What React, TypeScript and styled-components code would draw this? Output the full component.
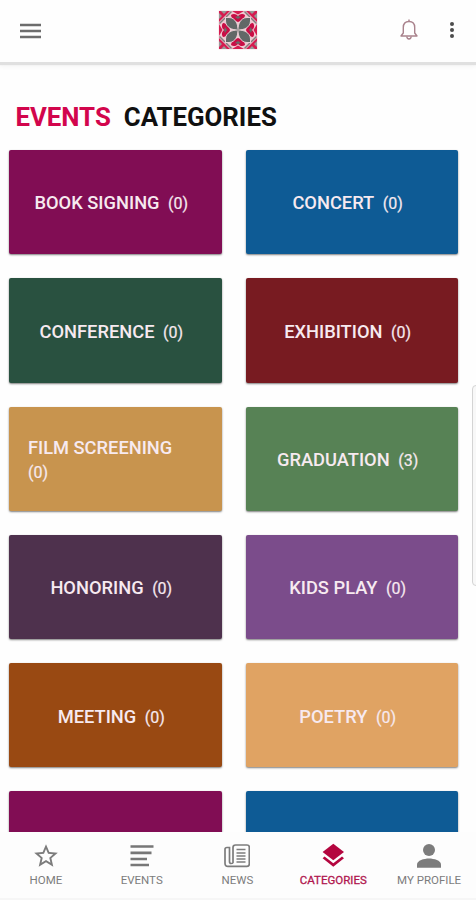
import React from "react";
import styled, { createGlobalStyle } from "styled-components";

const GlobalStyle = createGlobalStyle`
  * { box-sizing: border-box; }
  body { margin: 0; background: #fefefe; font-family: Roboto, "Liberation Sans", sans-serif; }
`;

const Screen = styled.div`
  position: relative;
  display: flex;
  flex-direction: column;
  height: 900px;
  overflow: hidden;
`;

const Toolbar = styled.header`
  display: grid;
  grid-template-columns: 1fr 40px 1fr;
  align-items: center;
  height: 62px;
  flex: none;
  padding: 0 15px 2px;
  background: #fefefe;
  box-shadow: 0 2px 1px 1px #e0e0e0, 0 4px 5px #f3f3f3;
  svg { display: block; }
`;

const MenuButton = styled.div`
  padding: 1px 0 0 5px;
`;

const Actions = styled.div`
  display: flex;
  justify-content: flex-end;
  align-items: center;
  gap: 25px;
`;

const Content = styled.main`
  flex: 1;
  min-height: 0;
  overflow: hidden;
  padding: 38px 18px 0 9.4px;
`;

const Heading = styled.h1`
  display: flex;
  gap: 13px;
  margin: 0;
  padding: 0 0 0 6px;
  height: 50px;
  font-size: 25.8px;
  line-height: 34px;
  font-weight: 700;
  color: #101010;
`;

const Accent = styled.span`
  color: #d2054c;
`;

const Grid = styled.div`
  display: grid;
  grid-template-columns: 1fr 1fr;
  column-gap: 24px;
  row-gap: 24px;
`;

const Card = styled.a<{ $color: string }>`
  display: flex;
  align-items: center;
  justify-content: center;
  height: 104.3px;
  padding: 4px 18.5px 0;
  border-radius: 2px;
  background: ${(p) => p.$color};
  box-shadow: 0 1px 2px rgba(0, 0, 0, 0.5);
  color: #f7eaf0;
`;

const CardText = styled.div`
  display: flex;
  flex-wrap: wrap;
  align-items: baseline;
  line-height: 24.5px;
`;

const CardName = styled.span`
  margin-right: 8.5px;
  font-size: 18.3px;
  font-weight: 500;
`;

const CardCount = styled.span`
  margin-right: 8.5px;
  font-size: 16px;
  -webkit-text-stroke: 0.2px;
`;

const ScrollHandle = styled.div`
  position: absolute;
  top: 385px;
  right: -6px;
  width: 10px;
  height: 201px;
  border: 1px solid #d4d4d4;
  border-radius: 4px;
  background: #f8f8f8;
`;

const BottomNav = styled.nav`
  display: grid;
  grid-template-columns: repeat(5, 1fr);
  flex: none;
  height: 68px;
  margin: 0 -1px 0 -2px;
  background: #fdfdfd;
  border-bottom: 2px solid #f6f6f6;
`;

const NavItem = styled.a<{ $active?: boolean }>`
  display: flex;
  flex-direction: column;
  align-items: center;
  padding-top: 11px;
  gap: 2px;
  font-size: 11.5px;
  line-height: 19px;
  white-space: nowrap;
  color: ${(p) => (p.$active ? "#b0164e" : "#7c7c7c")};
  -webkit-text-stroke: ${(p) => (p.$active ? "0.3px #b0164e" : "0")};
  svg { display: block; flex: none; }
`;

const MenuIcon = () => (
  <svg width="22" height="18" viewBox="0 0 22 18">
    <path d="M0 3h21M0 9h21M0 15h21" stroke="#6c6c6c" strokeWidth="2.4" />
  </svg>
);

const Quarter = () => (
  <g>
    <path d="M1 1h11L1 12Z" fill="#d51c50" />
    <path d="M3 1l3 3 3-3ZM1 3l3 3-3 3Z" fill="#999" />
    <path d="M13.500 1.500L8 7M1.500 13.500L7 8" stroke="#857b7d" strokeWidth="1.5" />
    <path d="M13 5C15.500 3 18.500 4 20 6V12C16.500 11 13.500 9 13 5Z" fill="#c90d45" />
    <path d="M5 13C3 15.500 4 18.500 6 20H12C11 16.500 9 13.500 5 13Z" fill="#c90d45" />
    <path d="M14 1h6v3.500Z" fill="#d51c50" />
    <path d="M1 14v6h3.500Z" fill="#d51c50" />
    <path d="M17 7l3-1v3Z" fill="#6c6969" />
    <path d="M7 17l-1 3h3Z" fill="#6c6969" />
  </g>
);

const Petal = () => (
  <path
    d="M19.800 19.800C15 20.500 7.500 17.500 7.500 11L7.500 7.500L11 7.500C17.500 7.500 20.500 15 19.800 19.800Z"
    fill="#626867"
    stroke="#f3d9df"
    strokeWidth=".9"
  />
);

const mirrors = ["", "translate(40 0) scale(-1 1)", "translate(0 40) scale(1 -1)", "translate(40 40) scale(-1 -1)"];

const Logo = () => (
  <svg width="40" height="40" viewBox="0 0 40 40">
    <rect x=".7" y=".7" width="38.6" height="38.6" fill="#efc7d0" />
    {mirrors.map((m) => <g key={m} transform={m}><Quarter /></g>)}
    {mirrors.map((m) => <g key={m} transform={m}><Petal /></g>)}
    <path d="M20 17.500l2.500 2.500-2.500 2.500-2.500-2.500Z" fill="#aaa1a2" />
  </svg>
);

const BellIcon = () => (
  <svg width="18" height="22" viewBox="0 0 18 22" fill="none" stroke="#a9828c" strokeWidth="1.4">
    <path d="M3.300 14V8.500C3.300 4.500 5.500 2.500 9 2.500S14.700 4.500 14.700 8.500V14L17 17H1Z" strokeLinejoin="round" />
    <path d="M9 .6v2M6.800 17.500C7 20.800 11 20.800 11.200 17.500" />
  </svg>
);

const MoreIcon = () => (
  <svg width="18" height="18" viewBox="0 0 18 18" fill="#4c4c4c">
    <circle cx="9" cy="3" r="2" /><circle cx="9" cy="9" r="2" /><circle cx="9" cy="15" r="2" />
  </svg>
);

const StarIcon = () => (
  <svg width="26" height="26" viewBox="1 1 22 22" fill="#7c7c7c">
    <path d="M22 9.240l-7.190-.62L12 2 9.190 8.630 2 9.240l5.460 4.730L5.820 21 12 17.270 18.180 21l-1.630-7.030L22 9.240zM12 15.400l-3.760 2.270 1-4.280-3.320-2.880 4.380-.38L12 6.100l1.710 4.040 4.380.38-3.320 2.880 1 4.280L12 15.400z" />
  </svg>
);

const LinesIcon = () => (
  <svg width="26" height="26" viewBox="0 0 26 26">
    <path d="M1.500 3.500h23M1.500 9.800h21M1.500 16h16.500M1.500 22h18.500" stroke="#777" strokeWidth="2.700" />
  </svg>
);

const NewsIcon = () => (
  <svg width="26" height="26" viewBox="0 0 26 26" fill="none" stroke="#7c7c7c" strokeWidth="1.700">
    <path d="M9 20V4.500Q9 2 11.500 2H23Q25.300 2 25.300 4.200V21Q25.300 23.300 23 23.300H4Q1 23.300 1 20.300V6.200Q1 4.500 3 4.500H5.500V18.200Q5.500 20.500 7 20.500T9 20" />
    <path d="M12.500 6.500h9M12.500 10h9M12.500 13h9M12.500 16h9M12.500 19h9" strokeWidth="1.400" />
  </svg>
);

const LayersIcon = () => (
  <svg width="26" height="26" viewBox="0 0 26 26" fill="#b4063f">
    <path d="M13.300 .8L24 8.900 13.300 17.300 2.600 8.900Z" />
    <path d="M2.600 15.200L13.300 23.800 24 15.200l-2-1.600-8.700 6.700L4.600 13.600Z" />
  </svg>
);

const PersonIcon = () => (
  <svg width="26" height="26" viewBox="0 0 26 26" fill="#7c7c7c">
    <circle cx="13" cy="7" r="6" />
    <path d="M1 24.800V21.500C1 17.500 8 15.500 13 15.500s12 2 12 6v3.300Z" />
  </svg>
);

const categories = [
  { name: "BOOK SIGNING", count: 0, color: "#810d54" },
  { name: "CONCERT", count: 0, color: "#0e5b95" },
  { name: "CONFERENCE", count: 0, color: "#295140" },
  { name: "EXHIBITION", count: 0, color: "#781b21" },
  { name: "FILM SCREENING", count: 0, color: "#c8944e" },
  { name: "GRADUATION", count: 3, color: "#578255" },
  { name: "HONORING", count: 0, color: "#4e314d" },
  { name: "KIDS PLAY", count: 0, color: "#7b4c8b" },
  { name: "MEETING", count: 0, color: "#994912" },
  { name: "POETRY", count: 0, color: "#e0a363" },
];

const navItems = [
  { label: "HOME", Icon: StarIcon },
  { label: "EVENTS", Icon: LinesIcon },
  { label: "NEWS", Icon: NewsIcon },
  { label: "CATEGORIES", Icon: LayersIcon, active: true },
  { label: "MY PROFILE", Icon: PersonIcon },
];

export default function App() {
  return (
    <Screen>
      <GlobalStyle />
      <Toolbar>
        <MenuButton>
          <MenuIcon />
        </MenuButton>
        <Logo />
        <Actions>
          <BellIcon />
          <MoreIcon />
        </Actions>
      </Toolbar>
      <Content>
        <Heading>
          <Accent>EVENTS</Accent>
          <span>CATEGORIES</span>
        </Heading>
        <Grid>
          {categories.map((c) => (
            <Card key={c.name} $color={c.color}>
              <CardText>
                <CardName>{c.name}</CardName>
                <CardCount>({c.count})</CardCount>
              </CardText>
            </Card>
          ))}
          <Card $color="#810d54" />
          <Card $color="#0e5b95" />
        </Grid>
      </Content>
      <BottomNav>
        {navItems.map(({ label, Icon, active }) => (
          <NavItem key={label} $active={active}>
            <Icon />
            <span>{label}</span>
          </NavItem>
        ))}
      </BottomNav>
      <ScrollHandle />
    </Screen>
  );
}
